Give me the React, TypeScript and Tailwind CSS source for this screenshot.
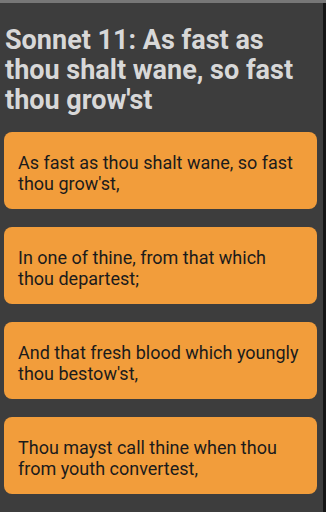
const lines = [
  "As fast as thou shalt wane, so fast thou grow'st,",
  "In one of thine, from that which thou departest;",
  "And that fresh blood which youngly thou bestow'st,",
  "Thou mayst call thine when thou from youth convertest,",
]

export default function App() {
  return (
    <div className="h-[512px] w-[326px] overflow-hidden flex flex-col bg-[#3d3d3d] font-['Roboto',sans-serif]">
      <div className="h-[3px] bg-[#777777]" />
      <div className="flex flex-1">
        <div className="flex-1 flex flex-col">
          {/* title */}
          <h1 className="pl-[5px] pr-[20px] pt-[22px] pb-[17px] text-[27px] leading-[30px] font-bold text-[#d8d8d8]">
            Sonnet 11: As fast as thou shalt wane, so fast thou grow's&#8203;t
          </h1>

          {/* verses */}
          <div className="flex flex-col gap-[18px] pl-[4px] pr-[6px]">
            {lines.map((l, i) => (
              <div
                key={i}
                className="h-[77px] rounded-[8px] bg-[#f29d3b] pl-[14px] pr-[15px] pt-[20px] text-[18px] leading-[21px] text-[#1b1b1b]"
              >
                {l}
              </div>
            ))}
          </div>
        </div>
        <div className="w-[3px] bg-[#161616]" />
      </div>
    </div>
  )
}
